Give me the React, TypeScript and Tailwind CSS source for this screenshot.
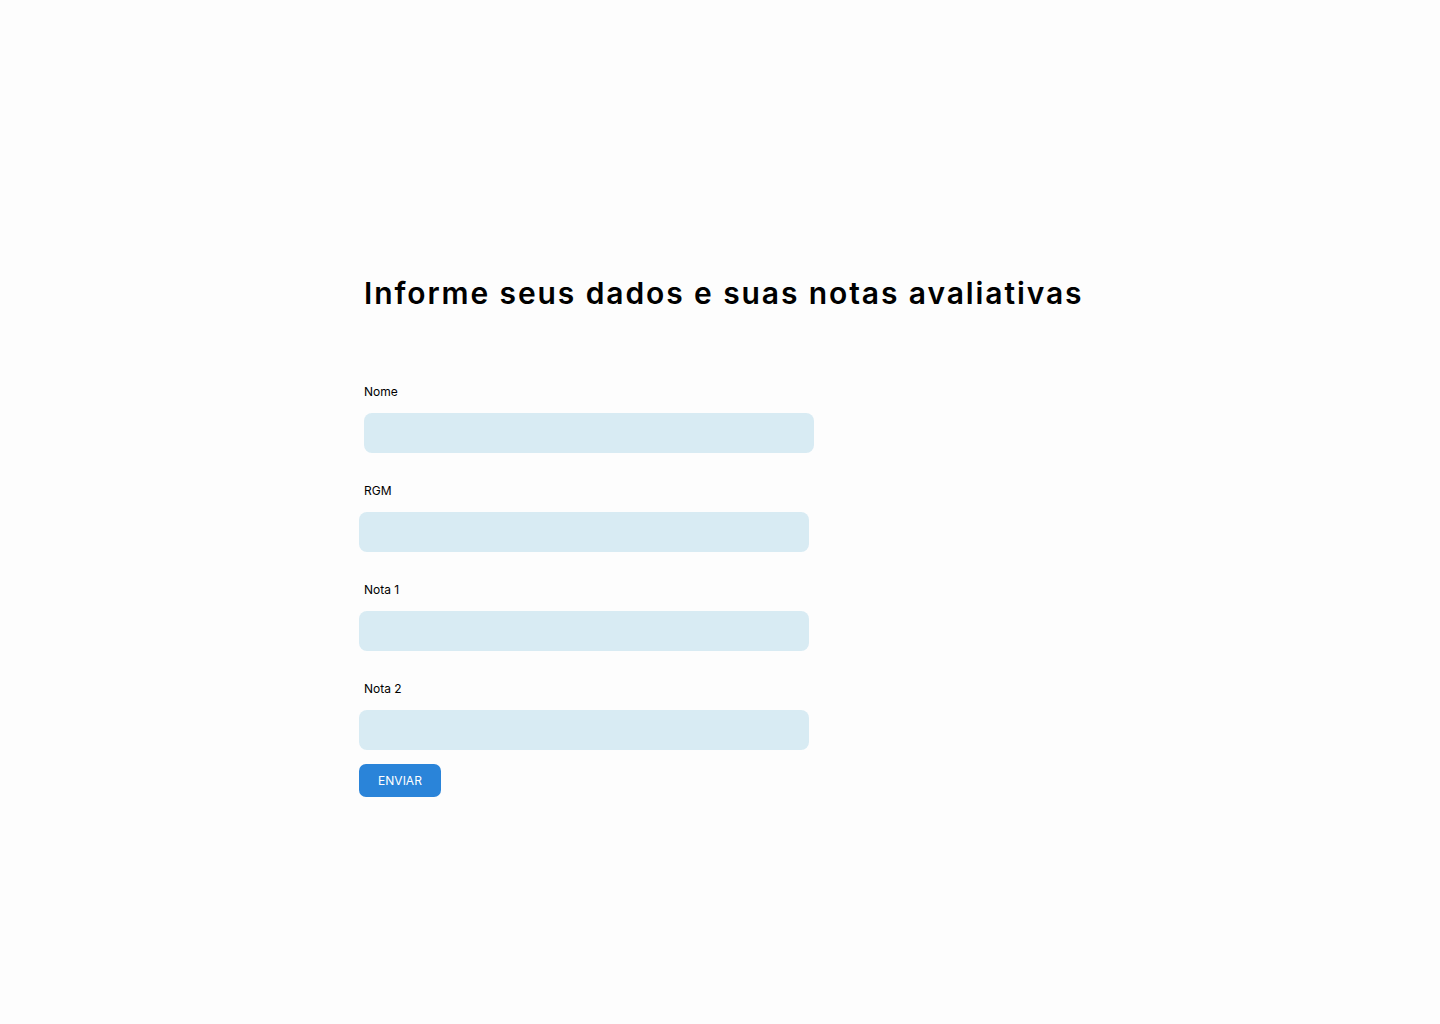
export default function App() {
  const fields = ['RGM', 'Nota 1', 'Nota 2'];

  return (
    <div className="min-h-screen bg-[#fdfdfd] font-['Inter',sans-serif] text-black">
      <div className="pt-[275px] pl-[359px]">
        <h1 className="ml-[5px] text-[30px] leading-[36px] font-semibold tracking-[1.9px]">
          Informe seus dados e suas notas avaliativas
        </h1>

        <form className="mt-[73px] flex flex-col" onSubmit={(e) => e.preventDefault()}>
          <label className="ml-[5px] text-[12px] leading-[16px]">Nome</label>
          <input
            type="text"
            className="ml-[5px] mt-[13px] h-[40px] w-[450px] rounded-[8px] bg-[#d8ebf3] px-3 outline-none"
          />

          {fields.map((f) => (
            <div key={f} className="mt-[30px] flex flex-col">
              <label className="ml-[5px] text-[12px] leading-[16px]">{f}</label>
              <input
                type="text"
                className="mt-[13px] h-[40px] w-[450px] rounded-[8px] bg-[#d8ebf3] px-3 outline-none"
              />
            </div>
          ))}

          <button
            type="submit"
            className="mt-[14px] h-[33px] w-[82px] rounded-[7px] bg-[#2a84d9] text-[12px] text-white"
          >
            ENVIAR
          </button>
        </form>
      </div>
    </div>
  );
}
